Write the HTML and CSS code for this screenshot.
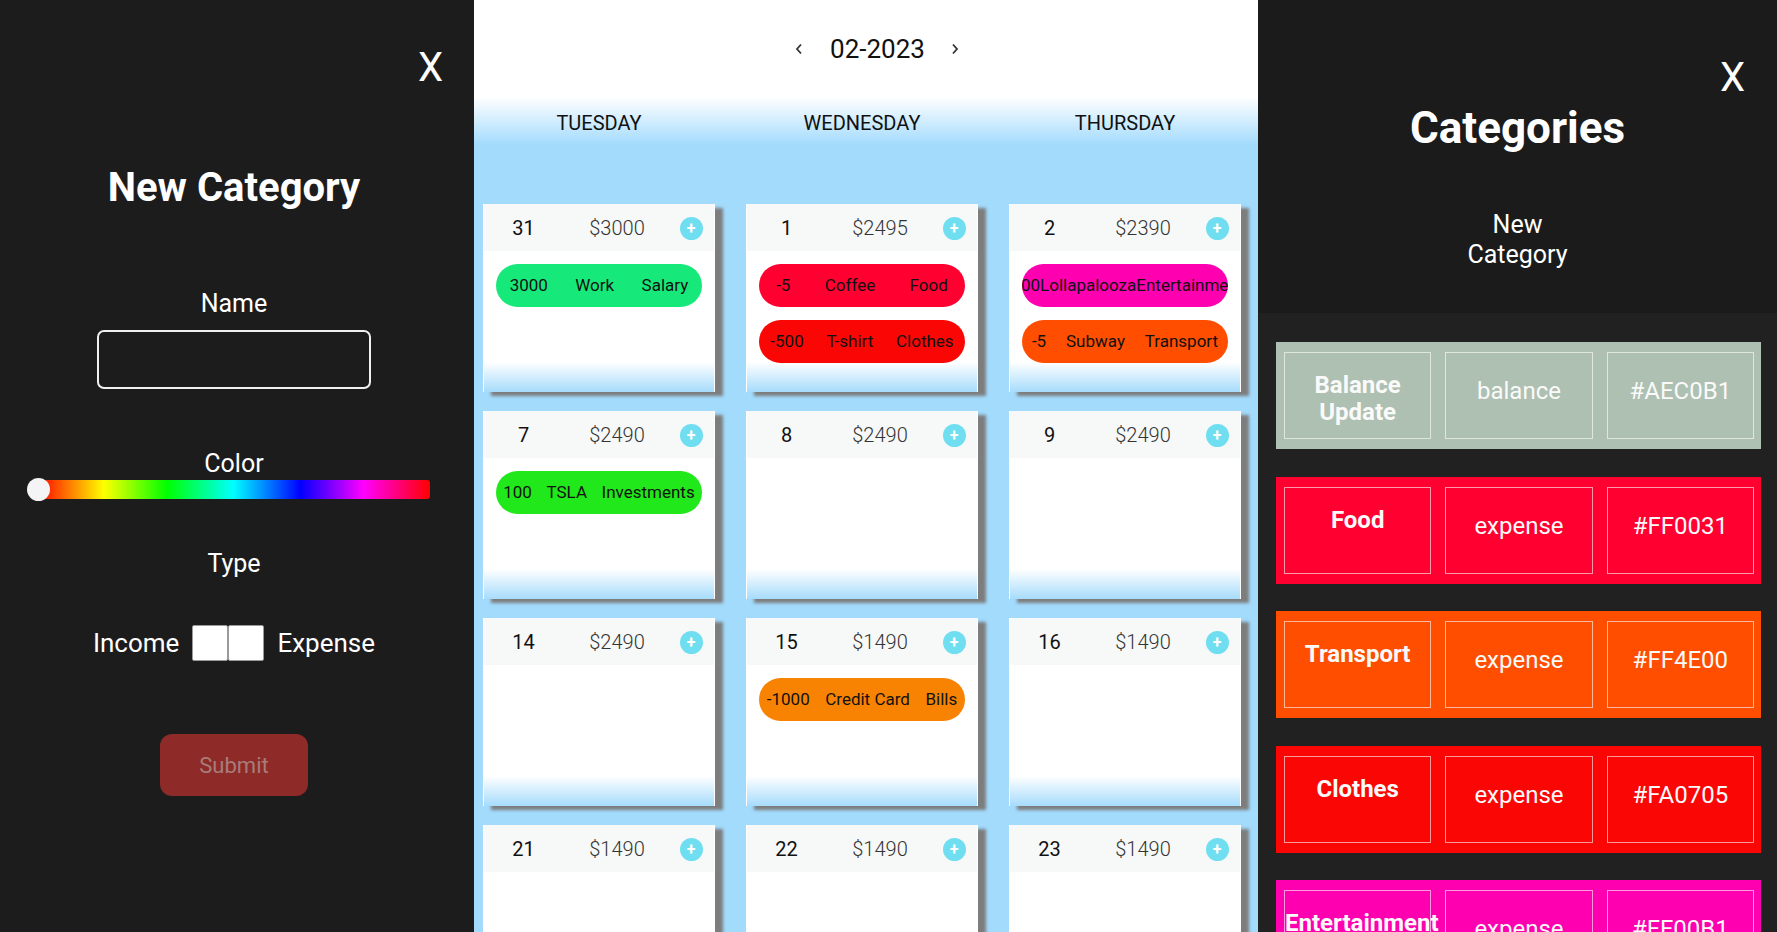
FILE: index.html
```html
<!DOCTYPE html>
<html lang="en">
<head>
<meta charset="utf-8">
<title>Budget Calendar</title>
<link rel="stylesheet" href="styles.css">
</head>
<body>
<div class="app">
  <aside class="new-cat">
    <div class="close-row"><span class="close">X</span></div>
    <h1 class="title">New Category</h1>
    <div class="label name-label">Name</div>
    <input class="name-input" type="text" aria-label="Name">
    <div class="label color-label">Color</div>
    <div class="slider"><div class="track"><span class="thumb"></span></div></div>
    <div class="label type-label">Type</div>
    <div class="type-row">
      <span>Income</span>
      <span class="toggle"><span class="sq"></span><span class="sq"></span></span>
      <span>Expense</span>
    </div>
    <button class="submit" type="button">Submit</button>
  </aside>

  <main class="calendar">
    <div class="month-row">
      <svg class="chev" width="10" height="14" viewBox="0 0 10 14"><polyline points="7,2.5 3,7 7,11.5" fill="none" stroke="#333" stroke-width="1.8"/></svg>
      <span class="month">02-2023</span>
      <svg class="chev" width="10" height="14" viewBox="0 0 10 14"><polyline points="3,2.5 7,7 3,11.5" fill="none" stroke="#333" stroke-width="1.8"/></svg>
    </div>
    <div class="day-names">
      <div>TUESDAY</div>
      <div>WEDNESDAY</div>
      <div>THURSDAY</div>
    </div>
    <div class="grid">
      <div class="card">
        <div class="card-head"><span class="num">31</span><span class="amt">$3000</span><span class="plus">+</span></div>
        <div class="pills">
          <div class="pill c-salary"><span>3000</span><span>Work</span><span>Salary</span></div>
        </div>
      </div>
      <div class="card">
        <div class="card-head"><span class="num">1</span><span class="amt">$2495</span><span class="plus">+</span></div>
        <div class="pills">
          <div class="pill c-food"><span>-5</span><span>Coffee</span><span>Food</span></div>
          <div class="pill c-clothes"><span>-500</span><span>T-shirt</span><span>Clothes</span></div>
        </div>
      </div>
      <div class="card">
        <div class="card-head"><span class="num">2</span><span class="amt">$2390</span><span class="plus">+</span></div>
        <div class="pills">
          <div class="pill pill-overflow c-ent"><span>-100</span><span>Lollapalooza</span><span>Entertainment</span></div>
          <div class="pill c-transport"><span>-5</span><span>Subway</span><span>Transport</span></div>
        </div>
      </div>

      <div class="card">
        <div class="card-head"><span class="num">7</span><span class="amt">$2490</span><span class="plus">+</span></div>
        <div class="pills">
          <div class="pill c-invest"><span>100</span><span>TSLA</span><span>Investments</span></div>
        </div>
      </div>
      <div class="card">
        <div class="card-head"><span class="num">8</span><span class="amt">$2490</span><span class="plus">+</span></div>
      </div>
      <div class="card">
        <div class="card-head"><span class="num">9</span><span class="amt">$2490</span><span class="plus">+</span></div>
      </div>

      <div class="card">
        <div class="card-head"><span class="num">14</span><span class="amt">$2490</span><span class="plus">+</span></div>
      </div>
      <div class="card">
        <div class="card-head"><span class="num">15</span><span class="amt">$1490</span><span class="plus">+</span></div>
        <div class="pills">
          <div class="pill c-bills"><span>-1000</span><span>Credit Card</span><span>Bills</span></div>
        </div>
      </div>
      <div class="card">
        <div class="card-head"><span class="num">16</span><span class="amt">$1490</span><span class="plus">+</span></div>
      </div>

      <div class="card">
        <div class="card-head"><span class="num">21</span><span class="amt">$1490</span><span class="plus">+</span></div>
      </div>
      <div class="card">
        <div class="card-head"><span class="num">22</span><span class="amt">$1490</span><span class="plus">+</span></div>
      </div>
      <div class="card">
        <div class="card-head"><span class="num">23</span><span class="amt">$1490</span><span class="plus">+</span></div>
      </div>
    </div>
  </main>

  <aside class="categories">
    <div class="cat-header">
      <div class="close-row"><span class="close">X</span></div>
      <h2 class="cat-title">Categories</h2>
      <div class="new-link">New Category</div>
    </div>
    <div class="cat-list">
      <div class="cat-row r-balance">
        <div class="cell name">Balance Update</div>
        <div class="cell">balance</div>
        <div class="cell">#AEC0B1</div>
      </div>
      <div class="cat-row r-food">
        <div class="cell name">Food</div>
        <div class="cell">expense</div>
        <div class="cell">#FF0031</div>
      </div>
      <div class="cat-row r-transport">
        <div class="cell name">Transport</div>
        <div class="cell">expense</div>
        <div class="cell">#FF4E00</div>
      </div>
      <div class="cat-row r-clothes">
        <div class="cell name">Clothes</div>
        <div class="cell">expense</div>
        <div class="cell">#FA0705</div>
      </div>
      <div class="cat-row r-ent">
        <div class="cell name">Entertainment</div>
        <div class="cell">expense</div>
        <div class="cell">#FF00B1</div>
      </div>
    </div>
  </aside>
</div>
</body>
</html>
```

FILE: styles.css
```css
* { box-sizing: border-box; }

html, body {
  margin: 0;
  padding: 0;
  height: 100%;
  overflow: hidden;
}

body {
  font-family: Roboto, "Noto Sans", "Liberation Sans", sans-serif;
  background: #1c1c1c;
}

.app {
  display: flex;
  height: 932px;
  overflow: hidden;
}

/* ---------- left panel ---------- */
.new-cat {
  width: 474px;
  flex: none;
  background: #1c1c1c;
  color: #fff;
  display: flex;
  flex-direction: column;
  align-items: center;
  padding-right: 6px;
}

.new-cat .close-row {
  align-self: stretch;
  display: flex;
  justify-content: flex-end;
  padding: 48px 25px 0 0;
}

.close {
  font-size: 40px;
  line-height: 40px;
  color: #fff;
  font-weight: 400;
}

.title {
  margin: 80px 0 0;
  font-size: 40px;
  line-height: 40px;
  font-weight: 700;
}

.label {
  font-size: 25px;
  line-height: 30px;
}

.name-label { margin-top: 81px; }

.name-input {
  margin-top: 11px;
  width: 274px;
  height: 59px;
  border: 2px solid #f0f0f0;
  border-radius: 7px;
  background: transparent;
  color: #fff;
  font-size: 20px;
  padding: 0 10px;
  outline: none;
}

.color-label { margin-top: 60px; }

.slider {
  align-self: flex-start;
  margin: 1px 0 0 37px;
  width: 393px;
  height: 19px;
}

.track {
  position: relative;
  height: 19px;
  border-radius: 3px;
  background: linear-gradient(to right, #f00 0%, #ff0 17%, #0f0 33%, #0ff 50%, #00f 67%, #f0f 83%, #f00 100%);
}

.thumb {
  position: absolute;
  left: -10px;
  top: -2px;
  width: 23px;
  height: 23px;
  border-radius: 50%;
  background: #f4f4f6;
}

.type-label { margin-top: 50px; }

.type-row {
  margin-top: 46px;
  display: flex;
  align-items: center;
  gap: 13px;
  font-size: 26px;
  line-height: 36px;
  height: 36px;
}

.toggle {
  display: flex;
  width: 72px;
  height: 36px;
}

.toggle .sq {
  width: 36px;
  height: 36px;
  background: #fff;
  border: 1px solid #9a9a9a;
  border-radius: 2px;
}

.submit {
  margin-top: 73px;
  width: 148px;
  height: 62px;
  border: none;
  border-radius: 12px;
  background: #8e2b28;
  color: #a87c7a;
  font-family: Roboto, "Noto Sans", sans-serif;
  font-size: 22px;
}

/* ---------- calendar ---------- */
.calendar {
  width: 784px;
  flex: none;
  background: linear-gradient(to bottom, #fff 0, #fff 97px, #a3dbfd 145px, #a3dbfd 100%);
  overflow: hidden;
}

.month-row {
  height: 97px;
  display: flex;
  align-items: center;
  justify-content: center;
  padding-left: 22px;
  color: #111;
}

.month {
  font-size: 26px;
  line-height: 30px;
  margin: 0 25px 0 26px;
}

.day-names {
  height: 52px;
  display: grid;
  grid-template-columns: repeat(3, 232px);
  column-gap: 31px;
  padding-left: 9px;
  align-items: center;
  text-align: center;
  font-size: 20px;
  color: #111;
}

.grid {
  display: grid;
  grid-template-columns: repeat(3, 232px);
  grid-auto-rows: 188px;
  column-gap: 31px;
  row-gap: 19px;
  padding: 55px 0 0 9px;
}

.card {
  background: linear-gradient(to bottom, #fff 0, #fff 158px, #a6dcfc 188px);
  border-left: 1px solid #fff;
  border-right: 1px solid #fff;
  box-shadow: 8px 4px 3px #7d7d7d;
  display: flex;
  flex-direction: column;
}

.card-head {
  height: 47px;
  flex: none;
  background: #f7f8f8;
  display: grid;
  grid-template-columns: 79px 108px 40px;
  align-items: center;
  justify-items: center;
  font-size: 20px;
  padding-top: 1px;
}

.num { color: #111; }
.amt { color: #333; font-weight: 300; }

.plus {
  width: 23px;
  height: 23px;
  border-radius: 50%;
  background: #6fdef0;
  color: #fff;
  font-size: 16px;
  font-weight: 700;
  line-height: 23px;
  text-align: center;
}

.pills {
  display: flex;
  flex-direction: column;
  gap: 13px;
  padding: 13px 12px 0 12px;
}

.pill {
  height: 43px;
  border-radius: 22px;
  display: flex;
  align-items: center;
  justify-content: space-around;
  overflow: hidden;
  font-size: 17px;
  color: #111;
  white-space: nowrap;
  padding-bottom: 1px;
}

.pill span { flex: none; }

.pill-overflow { justify-content: center; }

.c-salary { background: #16e979; }
.c-invest { background: #20e81a; }
.c-food { background: #ff0031; }
.c-clothes { background: #fa0705; }
.c-ent { background: #ff00b1; }
.c-transport { background: #ff4e00; }
.c-bills { background: #f88303; }

/* ---------- categories panel ---------- */
.categories {
  flex: 1;
  min-width: 0;
  background: #212121;
  color: #fff;
  display: flex;
  flex-direction: column;
}

.cat-header {
  height: 313px;
  flex: none;
  background: #1b1b1b;
  display: flex;
  flex-direction: column;
  align-items: center;
}

.cat-header .close-row {
  align-self: stretch;
  display: flex;
  justify-content: flex-end;
  padding: 58px 32px 0 0;
}

.cat-title {
  margin: 8px 0 0;
  font-size: 44px;
  line-height: 44px;
  font-weight: 700;
}

.new-link {
  margin-top: 60px;
  width: min-content;
  text-align: center;
  font-size: 25px;
  line-height: 30px;
}

.cat-list {
  display: flex;
  flex-direction: column;
  gap: 27.5px;
  padding: 29px 16px 0 18px;
}

.cat-row {
  height: 107px;
  flex: none;
  display: grid;
  grid-template-columns: repeat(3, minmax(0, 1fr));
  column-gap: 14px;
  padding: 10px 7px 10px 8px;
}

.cell {
  border: 1px solid rgba(255, 255, 255, 0.6);
  display: flex;
  align-items: center;
  justify-content: center;
  font-size: 24px;
  line-height: 27px;
  color: #fafafa;
  padding-bottom: 8px;
  text-align: center;
  white-space: nowrap;
}

.cell.name {
  display: block;
  padding: 19px 0 0;
  font-weight: 700;
  white-space: nowrap;
  line-height: 27px;
}

.r-balance { background: #aec0b1; }
.r-balance .name { padding: 19px 20px 0; white-space: normal; }
.r-food { background: #ff0031; }
.r-transport { background: #ff4e00; }
.r-clothes { background: #fa0705; }
.r-ent { background: #ff00b1; }
```
